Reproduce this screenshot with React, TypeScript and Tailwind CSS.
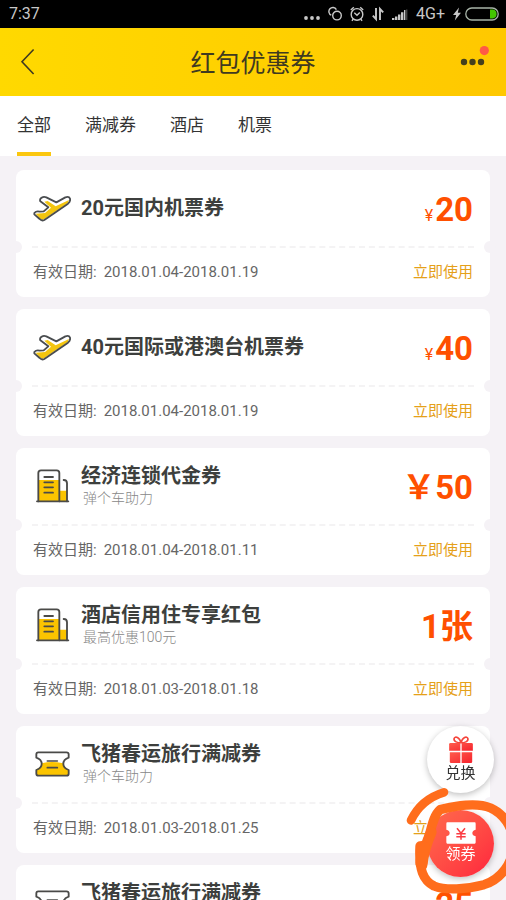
import { useState } from "react"

type Kind = "flight" | "hotel" | "coupon"

interface Coupon {
  id: number
  kind: Kind
  title: string
  note?: string
  unit?: string
  amount?: string
  period: string
}

const tabs = ["全部", "满减券", "酒店", "机票"]

const coupons: Coupon[] = [
  { id: 1, kind: "flight", title: "20元国内机票券", unit: "¥", amount: "20", period: "2018.01.04-2018.01.19" },
  { id: 2, kind: "flight", title: "40元国际或港澳台机票券", unit: "¥", amount: "40", period: "2018.01.04-2018.01.19" },
  { id: 3, kind: "hotel", title: "经济连锁代金券", note: "弹个车助力", amount: "￥50", period: "2018.01.04-2018.01.11" },
  { id: 4, kind: "hotel", title: "酒店信用住专享红包", note: "最高优惠100元", amount: "1张", period: "2018.01.03-2018.01.18" },
  { id: 5, kind: "coupon", title: "飞猪春运旅行满减券", note: "弹个车助力", period: "2018.01.03-2018.01.25" },
  { id: 6, kind: "coupon", title: "飞猪春运旅行满减券", note: "弹个车助力", amount: "25", period: "2018.01.03-2018.01.25" },
]

function FlightIcon() {
  return (
    <svg className="w-[38px] h-[27px]" viewBox="0 0 114 81" fill="none">
      <path
        d="M4 54 Q10 47 20 50 L32 49 L46 37 L22 19 Q19 12 26 8 Q32 4 40 7 L70 22 L97 7 Q108 3 111 11 Q113 19 105 26 L34 75 Q26 79 20 72 L4 58 Z"
        fill="#fff"
      />
      <path
        d="M8 56 L36 54 L54 38 L34 20 L44 18 L68 34 L108 15 L104 25 L33 73 Q26 77 20 70 Z"
        fill="#f3c50f"
      />
      <path
        d="M4 54 Q10 47 20 50 L32 49 L46 37 L22 19 Q19 12 26 8 Q32 4 40 7 L70 22 L97 7 Q108 3 111 11 Q113 19 105 26 L34 75 Q26 79 20 72 L4 58 Z"
        stroke="#4a4d50"
        strokeWidth="5.5"
        strokeLinejoin="round"
      />
    </svg>
  )
}

function HotelIcon() {
  return (
    <svg className="w-[38px] h-[34px]" viewBox="0 0 114 102" fill="none">
      <path d="M16 33 H79 V97 H16 Z M79 65 H102 V97 H79 Z" fill="#fbc400" />
      <g stroke="#4a4a48" strokeWidth="5.5" strokeLinecap="round">
        <path d="M16 97 V12 Q16 4 24 4 H71 Q79 4 79 12 V97" />
        <path d="M92 33 Q102 33 102 43 V97" />
        <path d="M12 97 H106" />
        <path d="M34 24 H60 M34 40 H60 M34 55 H60 M34 71 H60" />
      </g>
    </svg>
  )
}

function CouponIcon() {
  return (
    <svg className="w-[38px] h-[28px]" viewBox="0 0 114 84" fill="none">
      <path d="M26 40 Q57 32 90 40 Q91 53 106 58 V71 Q106 77 100 77 H16 Q10 77 10 71 V58 Q25 53 26 40 Z" fill="#fbc400" />
      <path
        d="M16 7 H100 Q107 7 107 13 V23 Q91 28 91 42 Q91 54 107 60 V71 Q107 77 100 77 H17 Q10 77 10 71 V60 Q26 54 26 42 Q26 28 10 23 V13 Q10 7 16 7 Z"
        stroke="#4a4a48"
        strokeWidth="5.5"
        strokeLinejoin="round"
      />
      <path d="M43 33 H73 M43 53 H73" stroke="#4a4a48" strokeWidth="5" strokeLinecap="round" />
    </svg>
  )
}

const icons = { flight: FlightIcon, hotel: HotelIcon, coupon: CouponIcon }

function StatusBar() {
  return (
    <div className="flex h-7 shrink-0 items-center justify-between bg-black pl-[9px] pr-[7px] text-base leading-none text-[#c8c8c8]">
      <span>7:37</span>
      <div className="flex items-center gap-2">
        <svg className="w-4 h-4" viewBox="0 0 16 16" fill="currentColor">
          <circle cx="2" cy="12" r="1.9" />
          <circle cx="8" cy="12" r="1.9" />
          <circle cx="14" cy="12" r="1.9" />
        </svg>
        <svg className="w-3.5 h-4" viewBox="0 0 14 16" fill="none" stroke="currentColor" strokeWidth="1.4">
          <circle cx="9" cy="9.6" r="4.3" />
          <path d="M3.3 9.2 A4 4 0 1 1 8.4 3.6" />
        </svg>
        <svg className="w-3.5 h-4" viewBox="0 0 14 16" fill="none" stroke="currentColor" strokeWidth="1.4">
          <circle cx="7" cy="8.4" r="5.8" />
          <path d="M4.3 6.8 L7 9.3 L9.8 6.6 M0.8 4 L3.8 1.2 M13.2 4 L10.2 1.2 M3.2 13 L2 14.8 M10.8 13 L12 14.8" />
        </svg>
        <svg className="w-3 h-4" viewBox="0 0 12 16" fill="none" stroke="currentColor" strokeWidth="1.9">
          <path d="M4 2 V13 L0.8 9.6 M8 14 V3 L11.2 6.4" />
        </svg>
        <svg className="w-4 h-4" viewBox="0 0 16 16" fill="currentColor">
          <path d="M0 12 h2.4 v2 h-2.4z M3 10.4 h2.4 v3.6 h-2.4z M6 8.4 h2.4 v5.6 h-2.4z M9 6.2 h2.4 v7.8 h-2.4z M12 4 h1.4 v10 h-1.4z" />
          <path d="M14 3.4 h1.4 v10.6 h-1.4z" opacity="0.35" />
        </svg>
        <span>4G+</span>
        <div className="flex items-center gap-1">
          <svg className="w-2 h-4" viewBox="0 0 8 16" fill="currentColor">
            <path d="M6 1.5 L0 9 H3.2 L1.8 14.5 L8 6.8 H4.8 Z" />
          </svg>
          <svg className="w-[34px] h-3.5" viewBox="0 0 34 14" fill="none">
            <rect x="0.8" y="1" width="32.4" height="12" rx="6" stroke="#a8b4a8" strokeWidth="1.3" />
            <path d="M25 2.6 H28 Q31.6 3.4 31.6 7 Q31.6 10.6 28 11.4 H25 Z" fill="#43c400" />
          </svg>
        </div>
      </div>
    </div>
  )
}

function Header() {
  return (
    <header className="flex h-[68px] shrink-0 items-center justify-between bg-linear-to-r from-[#ffd900] to-[#ffc800] pl-5 pr-4 text-[#3f3a20]">
      <button type="button" aria-label="返回" className="w-9">
        <svg className="w-4 h-7" viewBox="0 0 16 28" fill="none" stroke="currentColor" strokeWidth="1.6">
          <path d="M13.6 1.5 L2 13.7 L13.6 26" />
        </svg>
      </button>
      <h1 className="pt-[3px] text-[25px]">红包优惠券</h1>
      <button type="button" aria-label="更多" className="flex w-10 justify-end">
        <svg className="w-[30px] h-8" viewBox="0 0 30 32">
          <g fill="#45401c">
            <circle cx="4" cy="16" r="3.2" />
            <circle cx="12.5" cy="16" r="3.2" />
            <circle cx="21" cy="16" r="3.2" />
          </g>
          <circle cx="24.3" cy="4.6" r="4.6" fill="#ff5a45" />
        </svg>
      </button>
    </header>
  )
}

function CouponCard({ coupon }: { coupon: Coupon }) {
  const Icon = icons[coupon.kind]

  return (
    <li className="relative shrink-0 rounded-lg bg-white">
      <div className="flex h-[76px] items-center justify-between px-[17px]">
        <div className="flex items-center gap-[10px]">
          <Icon />
          <div>
            <h2 className="text-xl leading-6 font-bold text-[#3d3f3d]">{coupon.title}</h2>
            {coupon.note && <p className="pl-0.5 text-sm leading-5 font-light text-[#888]">{coupon.note}</p>}
          </div>
        </div>
        {coupon.amount && (
          <p className="flex items-baseline gap-0.5 pt-1 text-[#ff5000]">
            {coupon.unit && <span className="text-base">{coupon.unit}</span>}
            <span className="text-[33px] leading-10 font-bold">{coupon.amount}</span>
          </p>
        )}
      </div>

      <div className="mx-4 border-t-2 border-dashed border-[#f4f3f4]" />
      {/* Ticket notches */}
      <span className="absolute -left-1.5 top-[71px] size-3 rounded-full bg-[#f5f2f6]" />
      <span className="absolute -right-1.5 top-[71px] size-3 rounded-full bg-[#f5f2f6]" />

      <div className="flex h-[49px] items-center justify-between px-[17px] text-[15px]">
        <p className="flex gap-[7px] text-[#666]">
          <span>有效日期:</span>
          <time>{coupon.period}</time>
        </p>
        <a href="#use" className="text-[#e5a019]">
          立即使用
        </a>
      </div>
    </li>
  )
}

function FloatingActions() {
  return (
    <div className="fixed right-3 bottom-[23px] flex flex-col gap-[17px] text-[15px] leading-5">
      <button
        type="button"
        className="flex size-[67px] flex-col items-center rounded-full bg-white pt-[10px] text-[#333] shadow-[0_2px_6px_rgba(0,0,0,0.25)]"
      >
        <svg className="w-6 h-[27px]" viewBox="0 0 72 82" fill="none">
          <defs>
            <linearGradient id="gift" x1="0" y1="0" x2="1" y2="1">
              <stop offset="0" stopColor="#ff5c4c" />
              <stop offset="1" stopColor="#f5222d" />
            </linearGradient>
          </defs>
          <path
            d="M36 21 C26 21 13 17 15 8 C18 -1 32 4 36 21 C40 4 54 -1 57 8 C59 17 46 21 36 21 Z"
            stroke="#f5453c"
            strokeWidth="5"
          />
          <path d="M4 21 H68 Q72 21 72 25 V45 H0 V25 Q0 21 4 21 Z" fill="url(#gift)" />
          <path d="M2 49 H70 V78 Q70 82 66 82 H6 Q2 82 2 78 Z" fill="url(#gift)" />
          <path d="M36 23 V82" stroke="#fff" strokeWidth="4" />
        </svg>
        <span>兑换</span>
      </button>
      <button
        type="button"
        className="flex size-[67px] flex-col items-center rounded-full bg-linear-to-br from-[#ff6a4d] to-[#ff1f3d] pt-3 text-white shadow-[0_2px_6px_rgba(0,0,0,0.25)]"
      >
        <svg className="w-[30px] h-[22px]" viewBox="0 0 90 66" fill="none">
          <path
            d="M4 1 H86 Q89 1 89 5 V23 Q79 25 79 33 Q79 41 89 43 V61 Q89 65 86 65 H4 Q1 65 1 61 V43 Q11 41 11 33 Q11 25 1 23 V5 Q1 1 4 1 Z"
            fill="#fff"
          />
          <path d="M33 19 L45 34 L57 19 M45 34 V53 M31 35 H59 M31 44 H59" stroke="#fb3b42" strokeWidth="4.5" />
        </svg>
        <span>领券</span>
      </button>
    </div>
  )
}

// Hand-drawn marker circle around the claim button
function MarkerCircle() {
  return (
    <svg
      className="pointer-events-none fixed right-0 bottom-0 w-[120px] h-[180px]"
      viewBox="0 0 360 540"
      fill="none"
      stroke="#ff6d1c"
      strokeLinecap="round"
      strokeLinejoin="round"
    >
      <path d="M75 301 Q105 238 174 217" strokeWidth="26" />
      <path
        d="M122 372 C136 330 140 288 162 269 C210 258 270 246 314 264 C350 280 382 320 382 372 C382 430 344 478 294 494 C240 508 180 512 144 498 C112 482 98 450 102 378"
        strokeWidth="28"
      />
      <path d="M136 336 C120 372 112 400 108 436" strokeWidth="32" />
      <path d="M112 380 L106 430" strokeWidth="36" />
    </svg>
  )
}

export default function App() {
  const [active, setActive] = useState(tabs[0])

  return (
    <div className="flex h-screen flex-col overflow-hidden bg-[#f5f2f6] font-[Roboto,'Noto_Sans_CJK_SC',sans-serif]">
      <StatusBar />
      <Header />
      <nav className="flex h-[60px] shrink-0 gap-[34px] bg-white px-[17px] text-[17px] text-[#333]">
        {tabs.map((tab) => (
          <button
            key={tab}
            type="button"
            onClick={() => setActive(tab)}
            className={tab === active ? "border-y-4 border-t-transparent border-b-[#fbc70f]" : "border-y-4 border-transparent"}
          >
            {tab}
          </button>
        ))}
      </nav>
      <main className="min-h-0 flex-1 overflow-y-auto px-4 pt-[14px] [scrollbar-width:none]">
        <ul className="flex flex-col gap-3 pb-3">
          {coupons.map((coupon) => (
            <CouponCard key={coupon.id} coupon={coupon} />
          ))}
        </ul>
      </main>
      <FloatingActions />
      <MarkerCircle />
    </div>
  )
}
